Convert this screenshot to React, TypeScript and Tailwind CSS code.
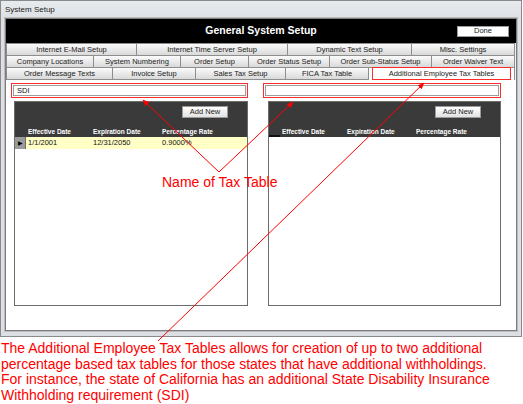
import type { ReactNode } from 'react'

type TabDef = { label: string; w: string; active?: boolean }

const rows: TabDef[][] = [
  [
    { label: 'Internet E-Mail Setup', w: 'w-[131px]' },
    { label: 'Internet Time Server Setup', w: 'w-[151px]' },
    { label: 'Dynamic Text Setup', w: 'w-[124px]' },
    { label: 'Misc. Settings', w: 'w-[103px]' },
  ],
  [
    { label: 'Company Locations', w: 'w-[88px]' },
    { label: 'System Numbering', w: 'w-[87px]' },
    { label: 'Order Setup', w: 'w-[68px]' },
    { label: 'Order Status Setup', w: 'w-[81px]' },
    { label: 'Order Sub-Status Setup', w: 'w-[102px]' },
    { label: 'Order Waiver Text', w: 'w-[83px]' },
  ],
  [
    { label: 'Order Message Texts', w: 'w-[107px]' },
    { label: 'Invoice Setup', w: 'w-[83px]' },
    { label: 'Sales Tax Setup', w: 'w-[90px]' },
    { label: 'FICA Tax Table', w: 'w-[83px]' },
    { label: 'Additional Employee Tax Tables', w: 'w-[146px]', active: true },
  ],
]

function Tab({ tab, first, last }: { tab: TabDef; first: boolean; last: boolean }) {
  if (tab.active) {
    return (
      <div
        className={`${tab.w} relative h-full border-t border-r border-[#8e8e8e] bg-white flex items-center justify-center text-[7.5px] text-[#222]`}
      >
        {/* red annotation box */}
        <div className="absolute left-[3px] right-[3px] top-[-1px] bottom-0 border border-[#ff2a2a]" />
        {tab.label}
      </div>
    )
  }
  return (
    <div
      className={`${tab.w} h-full border-t border-r border-[#8e8e8e] ${first ? 'border-l' : ''} ${
        last ? 'border-b' : ''
      } bg-gradient-to-b from-[#fbfbfb] to-[#d9d9d9] flex items-center justify-center text-[7.5px] text-[#222] whitespace-nowrap`}
    >
      {tab.label}
    </div>
  )
}

function RedBox({ children }: { children?: ReactNode }) {
  return (
    <div className="h-[15px] border border-[#ff2a2a] p-px">
      <div className="h-full border border-[#9c9c9c] bg-white flex items-center pl-[3px] text-[7.5px] text-[#111]">
        {children}
      </div>
    </div>
  )
}

function Grid({ withRow }: { withRow?: boolean }) {
  return (
    <div className="h-[205px] border border-[#6c6c6c] bg-white flex flex-col">
      <div className="h-[35px] bg-[#3a3a3a] flex flex-col relative">
        <div className="flex justify-end pt-[4px] pr-[19px]">
          <div className="w-[46px] h-[12px] border border-[#9a9a9a] bg-gradient-to-b from-white to-[#e2e2e2] flex items-center justify-center text-[7.5px] text-[#222]">
            Add New
          </div>
        </div>
        <div className="mt-auto h-[10px] flex items-center text-white font-bold text-[6.5px]">
          <div className="w-[13px]" />
          <span className="w-[65px]">Effective Date</span>
          <span className="w-[69px]">Expiration Date</span>
          <span>Percentage Rate</span>
        </div>
        {!withRow && <div className="absolute left-0 bottom-0 w-[11px] h-[2px] bg-[#111]" />}
      </div>
      {withRow && (
        <div className="h-[12px] flex items-center bg-[#ffffc6] text-[7.5px] text-[#111]">
          <div className="w-[11px] h-full bg-[#9b9b9b] border-r border-[#6c6c6c] flex items-center justify-center text-[6px] text-black">
            ▶
          </div>
          <span className="w-[67px] pl-[2px]">1/1/2001</span>
          <span className="w-[69px]">12/31/2050</span>
          <span>0.9000%</span>
        </div>
      )}
    </div>
  )
}

export default function App() {
  return (
    <div className="relative w-[523px] h-[404px] overflow-hidden bg-white font-['Liberation_Sans',Arial,sans-serif]">
      {/* window */}
      <div className="w-[522px] h-[337px] border border-[#8a8a8a] bg-[#dcdfe3] flex flex-col">
        <div className="h-[17px] flex items-center pl-[4px] text-[8px] text-[#1a1a1a] bg-gradient-to-b from-[#e8ebee] to-[#dde0e4]">
          System Setup
        </div>

        <div className="flex-1 mx-[4px] mb-[5px] border border-[#7c7c7c] shadow-[0_0_0_1px_#bdbdbd] bg-white flex flex-col">
          {/* header bar */}
          <div className="h-[24px] bg-black grid grid-cols-[1fr_auto_1fr] items-center">
            <div />
            <span className="text-white font-bold text-[10.5px]">General System Setup</span>
            <div className="flex justify-end pr-[7px]">
              <div className="w-[52px] h-[11px] bg-white border border-[#9a9a9a] flex items-center justify-center text-[7.5px] text-[#222]">
                Done
              </div>
            </div>
          </div>

          {/* tabs */}
          <div className="bg-[#f2f2f2]">
            {rows.map((row, ri) => (
              <div key={ri} className={`flex ${ri === 2 ? 'h-[13px]' : 'h-[12px]'}`}>
                {row.map((t, i) => (
                  <Tab key={t.label} tab={t} first={i === 0} last={ri === 2} />
                ))}
              </div>
            ))}
          </div>

          {/* content */}
          <div className="flex-1 flex gap-[15px] pl-[5px] pt-[3px]">
            <div className="w-[237px] flex flex-col gap-[3px]">
              <RedBox>SDI</RedBox>
              <div className="ml-[3px]">
                <Grid withRow />
              </div>
            </div>
            <div className="w-[238px] flex flex-col gap-[3px]">
              <RedBox />
              <div className="ml-[5px]">
                <Grid />
              </div>
            </div>
          </div>
        </div>
      </div>

      {/* annotation text */}
      <p className="mt-[4px] pl-[1px] text-[14px] leading-[15.7px] text-[#ff0000] whitespace-nowrap">
        The Additional Employee Tax Tables allows for creation of up to two additional
        <br />
        percentage based tax tables for those states that have additional withholdings.
        <br />
        For instance, the state of California has an additional State Disability Insurance
        <br />
        Withholding requirement (SDI)
      </p>

      {/* callouts */}
      <span className="absolute left-[162px] top-[174px] text-[14px] leading-[16px] text-[#ff0000] whitespace-nowrap">
        Name of Tax Table
      </span>
      <svg className="absolute inset-0 pointer-events-none" width="523" height="404" viewBox="0 0 523 404">
        <defs>
          <marker id="ah" viewBox="0 0 10 10" refX="9" refY="5" markerWidth="7" markerHeight="7" orient="auto">
            <path d="M0 1 L10 5 L0 9 Z" fill="#ff0000" />
          </marker>
        </defs>
        <g stroke="#ff0000" strokeWidth="1" fill="none">
          <line x1="219" y1="172" x2="143" y2="100" markerEnd="url(#ah)" />
          <line x1="219" y1="172" x2="293" y2="102" markerEnd="url(#ah)" />
          <line x1="158" y1="341" x2="424" y2="83" markerEnd="url(#ah)" />
        </g>
      </svg>
    </div>
  )
}
